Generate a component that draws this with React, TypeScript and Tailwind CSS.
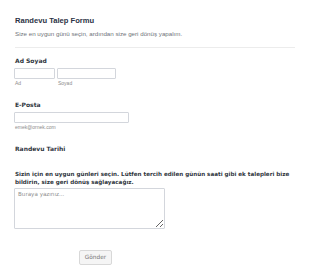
import React from "react";

function Label({ children }: { children: React.ReactNode }) {
  return (
    <div className="font-['DejaVu_Sans',sans-serif] font-bold text-[6px] leading-[8px] text-[#2f3640]">
      {children}
    </div>
  );
}

export default function App() {
  return (
    <div className="bg-white w-[310px] h-[280px] overflow-hidden font-['Liberation_Sans',Arial,sans-serif]">
      <div className="pl-[15px] pr-[15px] pt-[16px]">
        <div className="text-[7.6px] leading-[9px] font-bold text-[#2c3345]">Randevu Talep Formu</div>
        <div className="mt-[5px] text-[6.2px] leading-[7px] text-[#6f737a]">
          Size en uygun günü seçin, ardından size geri dönüş yapalım.
        </div>
        <div className="mt-[10px] h-px bg-[#ececec]" />

        <div className="mt-[9px]">
          <Label>Ad Soyad</Label>
          <div className="mt-[3px] flex gap-[2px] -ml-px">
            <div className="flex flex-col">
              <input className="block w-[41px] h-[11px] border border-[#d3d6dc] rounded-[1px] bg-white outline-none" />
              <span className="block mt-[2px] text-[5px] leading-[5px] text-[#8c8c8c] pl-px">Ad</span>
            </div>
            <div className="flex flex-col">
              <input className="block w-[59px] h-[11px] border border-[#d3d6dc] rounded-[1px] bg-white outline-none" />
              <span className="block mt-[2px] text-[5px] leading-[5px] text-[#8c8c8c] pl-px">Soyad</span>
            </div>
          </div>
        </div>

        <div className="mt-[15px]">
          <Label>E-Posta</Label>
          <div className="mt-[3px] -ml-px flex flex-col">
            <input className="block w-[115px] h-[11px] border border-[#d3d6dc] rounded-[1px] bg-white outline-none" />
            <span className="block mt-[2px] text-[5px] leading-[5px] text-[#8c8c8c] pl-px">emek@ornek.com</span>
          </div>
        </div>

        <div className="mt-[15px]">
          <Label>Randevu Tarihi</Label>
        </div>

        <div className="mt-[17px] pr-px">
          <div className="font-['DejaVu_Sans',sans-serif] font-bold text-[5.6px] leading-[8px] text-[#2f3640]">
            Sizin için en uygun günleri seçin. Lütfen tercih edilen günün saati gibi ek talepleri bize bildirin, size geri dönüş sağlayacağız.
          </div>
          <textarea
            placeholder="Buraya yazınız..."
            className="mt-[2px] -ml-px block w-[151px] h-[41px] border border-[#d3d6dc] rounded-[1px] px-[3px] py-[2px] text-[5.6px] leading-[7px] text-[#2c3345] placeholder:text-[#8f8f8f] font-['DejaVu_Sans',sans-serif] outline-none resize-y"
          />
        </div>

        <div className="mt-[21px] pl-[64px]">
          <button className="block w-[33px] h-[15px] border border-[#d8d8d8] rounded-[2px] bg-[#f5f5f5] text-[5.8px] leading-[7px] text-[#777] font-['DejaVu_Sans',sans-serif]">
            Gönder
          </button>
        </div>
      </div>
    </div>
  );
}
